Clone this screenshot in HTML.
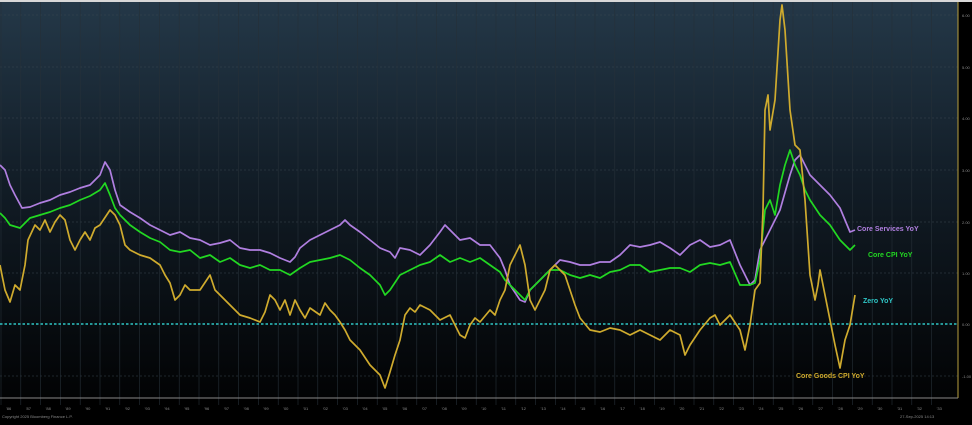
<!DOCTYPE html>
<html><head><meta charset="utf-8"><style>
html,body{margin:0;padding:0;background:#000;}
body{width:972px;height:420px;overflow:hidden;}
</style></head><body>
<svg width="972" height="420" viewBox="0 0 972 420" xmlns="http://www.w3.org/2000/svg" font-family="Liberation Sans, sans-serif">
<defs><linearGradient id="bg" x1="0" y1="0" x2="0" y2="1">
<stop offset="0" stop-color="#243848"/><stop offset="0.45" stop-color="#121d27"/><stop offset="1" stop-color="#020304"/></linearGradient></defs>
<rect width="972" height="420" fill="#000"/>
<rect x="0" y="2" width="958" height="396" fill="url(#bg)"/>
<rect x="0" y="0" width="972" height="2" fill="#d8d8d8"/>
<g stroke="#3a4650" stroke-width="0.6" stroke-dasharray="2 2">
<line x1="0" y1="15" x2="958" y2="15"/><line x1="0" y1="67" x2="958" y2="67"/><line x1="0" y1="118" x2="958" y2="118"/><line x1="0" y1="170" x2="958" y2="170"/><line x1="0" y1="222" x2="958" y2="222"/><line x1="0" y1="273" x2="958" y2="273"/><line x1="0" y1="376" x2="958" y2="376"/>
</g>
<g stroke="#263038" stroke-width="0.6" id="vg"></g>
<line x1="958" y1="2" x2="958" y2="398" stroke="#b8a040" stroke-width="1"/>
<line x1="0" y1="398" x2="958" y2="398" stroke="#888" stroke-width="1"/>
<g fill="#8a8a8a" font-size="4">
<text x="962" y="17">6.00</text><text x="962" y="69">5.00</text><text x="962" y="120">4.00</text><text x="962" y="172">3.00</text><text x="962" y="224">2.00</text><text x="962" y="275">1.00</text><text x="962" y="326">0.00</text><text x="962" y="378">-1.00</text>
<text x="2" y="418">Copyright 2025 Bloomberg Finance L.P.</text><text x="900" y="418">27-Sep-2025 14:13</text>
</g>
<line x1="0" y1="324" x2="958" y2="324" stroke="#2fc6c6" stroke-width="1.5" stroke-dasharray="2.5 2"/>
<polyline fill="none" stroke="#b07fe0" stroke-width="1.7" stroke-linejoin="round" points="0,165 5,170 10,185 15,195 22,208 30,207 40,203 50,200 60,195 70,192 80,188 90,185 100,175 105,162 110,170 115,190 120,205 130,212 140,218 150,225 160,230 170,235 180,232 190,238 200,240 210,245 220,243 230,240 240,248 250,250 260,250 270,253 280,258 290,262 295,257 300,248 310,240 320,235 330,230 340,225 345,220 350,225 360,232 370,240 380,248 390,252 395,258 400,248 410,250 420,255 430,245 440,232 445,225 450,230 460,240 470,238 480,245 490,245 500,258 505,270 510,285 520,300 525,302 530,290 540,280 550,270 560,260 570,262 580,265 590,265 600,262 610,262 620,255 630,245 640,247 650,245 660,242 670,248 680,255 690,245 700,240 710,247 720,245 730,240 740,265 745,275 750,285 755,280 760,250 765,240 770,230 780,210 790,175 795,160 800,155 805,165 810,175 820,185 830,195 840,208 845,220 850,232 855,230"/>
<polyline fill="none" stroke="#22d822" stroke-width="1.7" stroke-linejoin="round" points="0,213 5,218 10,225 20,228 30,218 40,215 50,212 60,208 70,205 80,200 90,196 100,190 105,183 110,195 115,208 120,215 130,225 140,232 150,238 160,242 170,250 180,252 190,250 200,258 210,255 220,262 230,258 240,265 250,268 260,265 270,270 280,270 290,275 300,268 310,262 320,260 330,258 340,255 350,260 360,268 370,275 380,285 385,295 390,290 400,275 410,270 420,265 430,262 440,255 450,262 460,258 470,262 480,258 490,265 500,272 505,280 510,285 520,295 525,300 530,290 540,280 550,270 560,270 570,275 580,278 590,275 600,278 610,272 620,270 630,265 640,265 650,272 660,270 670,268 680,268 690,272 700,265 710,263 720,265 730,262 740,285 745,285 750,285 755,283 760,260 765,210 770,200 775,215 780,185 785,165 790,150 795,165 800,175 805,190 810,200 820,215 830,225 840,240 845,245 850,250 855,245"/>
<polyline fill="none" stroke="#cfab2e" stroke-width="1.7" stroke-linejoin="round" points="0,265 5,290 10,302 15,285 20,290 25,265 28,240 35,225 40,230 45,220 50,232 55,222 60,215 65,220 70,240 75,250 80,240 85,232 90,240 95,228 100,225 110,210 115,215 120,225 125,245 130,250 140,255 150,258 160,265 165,275 170,283 175,300 180,295 185,285 190,290 200,290 210,275 215,290 220,295 230,305 240,315 250,318 260,322 265,312 270,295 275,300 280,310 285,300 290,315 295,300 300,310 305,318 310,308 320,315 325,303 330,310 335,315 340,322 345,330 350,340 360,350 370,365 380,375 385,388 390,372 395,355 400,340 405,315 410,308 415,312 420,305 430,310 440,320 450,315 460,335 465,338 470,325 475,318 480,322 490,310 495,315 500,300 505,290 510,265 515,255 520,245 525,265 530,300 535,310 540,300 545,290 550,270 555,265 560,270 565,275 570,290 575,305 580,318 590,330 600,332 610,328 620,330 630,335 640,330 650,335 660,340 670,330 680,335 685,355 690,345 700,330 710,318 715,315 720,325 730,315 740,330 745,350 750,325 755,290 760,283 763,210 765,110 768,95 770,130 775,100 780,20 782,5 785,30 790,110 795,145 800,150 805,200 810,275 815,300 818,285 820,270 825,295 830,320 835,345 840,368 845,340 850,325 855,295"/>
<g font-size="7" font-weight="bold">
<text x="857" y="231" fill="#b07fe0">Core Services YoY</text>
<text x="868" y="257" fill="#22d822">Core CPI YoY</text>
<text x="863" y="303" fill="#2fc6c6">Zero YoY</text>
<text x="796" y="378" fill="#cfab2e">Core Goods CPI YoY</text>
</g>
<g fill="#888" font-size="4" id="xl"></g>
<script>
var vg=document.getElementById('vg'),xl=document.getElementById('xl');
for(var i=0;i<48;i++){var x=i*19.8+1;
var l=document.createElementNS('http://www.w3.org/2000/svg','line');l.setAttribute('x1',x);l.setAttribute('x2',x);l.setAttribute('y1',2);l.setAttribute('y2',405);vg.appendChild(l);
var t=document.createElementNS('http://www.w3.org/2000/svg','text');t.setAttribute('x',x+5);t.setAttribute('y',410);t.textContent="'"+String((86+i)%100).padStart(2,'0');xl.appendChild(t);}
</script>
</svg>
</body></html>
